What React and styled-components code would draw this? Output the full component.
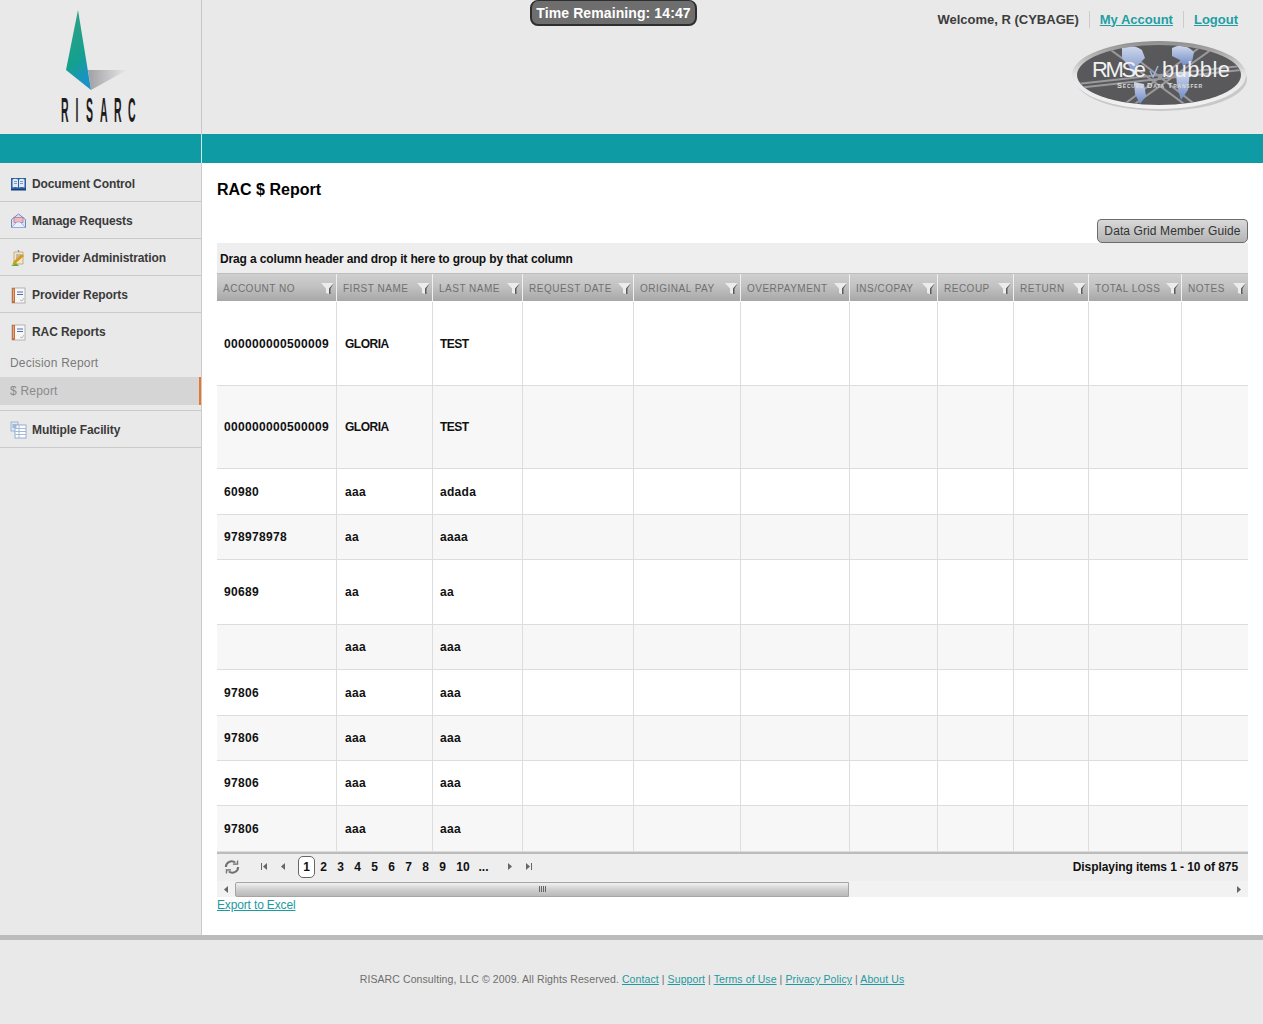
import React from "react";
import styled, { createGlobalStyle } from "styled-components";

const Global = createGlobalStyle`
  html, body { margin: 0; padding: 0; background: #fff; }
  body { font-family: "Liberation Sans", Arial, sans-serif; color: #000; }
  * { box-sizing: border-box; }
`;
const Page = styled.div`width: 1263px; display: flex; flex-direction: column;`;
const Header = styled.header`display: flex; height: 134px; background: #e9e9e9;`;
const LogoCell = styled.div`width: 202px; flex: none; border-right: 1px solid #c8c8c8; padding: 10px 0 0 57px;`;
const HeaderMain = styled.div`flex: 1; display: flex; align-items: flex-start; padding-left: 328px;`;
const Timer = styled.div`
  width: 167px; height: 26px; background: #6e6e6e; border: 2px solid #2e2e2e; border-top-width: 1px;
  border-radius: 8px; color: #fff; font-weight: bold; font-size: 14px; letter-spacing: .1px; line-height: 24px; text-align: center;
`;
const UserCol = styled.div`margin-left: auto; display: flex; flex-direction: column; align-items: flex-end; padding: 10px 15px 0 0;`;
const UserRow = styled.div`display: flex; align-items: center; height: 19px; font-size: 13px; font-weight: bold; color: #3c3c3c; padding-right: 10px; padding-bottom: 1px;`;
const Sep = styled.span`width: 1px; height: 17px; background: #ccc; margin: 0 10px;`;
const TopLink = styled.a`color: #1f9ea3; text-decoration: underline;`;
const Band = styled.div`height: 29px; background: #0f9ba3; padding-left: 201px;`;
const BandLine = styled.div`width: 1px; height: 29px; background: #d3e6e8;`;
const Body = styled.div`display: flex; height: 772px;`;
const Side = styled.nav`width: 202px; flex: none; background: #e9e9e9; border-right: 1px solid #cbcbcb; padding-top: 1px;`;
const MenuItem = styled.div`
  display: flex; align-items: center; gap: 5px; height: ${p => p.$h || 37}px; padding: 2px 0 0 10px;
  font-size: 12px; font-weight: bold; color: #3a3a3a; letter-spacing: -.1px;
  border-bottom: ${p => p.$plain ? "none" : "1px solid #c9c9c9"};
`;
const SubItem = styled.div`
  height: 28px; line-height: 29px; padding-left: 10px; font-size: 12px; letter-spacing: .2px; color: ${p => p.$active ? "#8a8a8a" : "#7a7a7a"};
  background: ${p => p.$active ? "#d5d5d5" : "transparent"};
  width: ${p => p.$active ? "201px" : "auto"};
  border-right: ${p => p.$active ? "2px solid #e8762a" : "none"};
`;
const Divider = styled.div`height: 6px; border-bottom: 1px solid #c9c9c9;`;
const Main = styled.main`flex: 1; padding: 17px 15px 0 15px; display: flex; flex-direction: column; background: #fff;`;
const Title = styled.h1`margin: 0; font-size: 16px; line-height: 20px; font-weight: bold; color: #000;`;
const ButtonRow = styled.div`display: flex; justify-content: flex-end; margin-top: 19px;`;
const GuideButton = styled.button`
  width: 151px; height: 24px; padding: 0; border: 1px solid #6c6c6c; border-radius: 4px 4px 5px 5px;
  background: linear-gradient(#d9d9d9, #b4b4b4); font: 12px "Liberation Sans", Arial, sans-serif; letter-spacing: .1px; color: #333;
`;
const GroupBar = styled.div`height: 31px; padding: 3px 0 0 3px; background: #eeeeee; font-size: 12px; font-weight: bold; letter-spacing: -.13px; line-height: 27px; color: #111; border-bottom: 1px solid #bdbdbd;`;
const Grid = styled.table`width: 1031px; table-layout: fixed; border-collapse: separate; border-spacing: 0;`;
const HeadCell = styled.th`
  height: 28px; padding: 2px 6px 0; position: relative; text-align: left; font-weight: normal; font-size: 10px; letter-spacing: .5px; color: #707070; white-space: nowrap;
  background: linear-gradient(#cfcfcf 0%, #c2c2c2 45%, #a7a7a7 100%) padding-box; border-right: 1px solid #f0f0f0; border-bottom: 1px solid #fff;
  &:last-child { border-right: none; }
`;
const FilterIcon = styled.svg`position: absolute; right: 2px; top: 8px;`;
const Row = styled.tr`height: ${p => p.$h}px; background: ${p => p.$alt ? "#f7f7f7" : "#fff"};`;
const Cell = styled.td`
  padding: 0 0 0 ${p => p.$pad ?? 7}px; font-size: 12px; font-weight: bold; color: #111; border-right: 1px solid #ddd; border-bottom: 1px solid #ddd; white-space: nowrap; overflow: hidden;
  letter-spacing: ${p => p.$ls ?? 0}px;
  &:last-child { border-right: none; }
`;
const Pager = styled.div`
  height: 29px; display: flex; align-items: center; background: #eeeeee; border-top: 2px solid #bcbcbc; padding-bottom: 2px; font-size: 12px; font-weight: bold; color: #111;
`;
const RefreshWrap = styled.span`width: 16px; margin: 0 16px 0 7px; display: flex;`;
const Nav = styled.span`width: 18px; display: flex; justify-content: center;`;
const PageBox = styled.span`
  width: 17px; height: 22px; display: flex; align-items: center; justify-content: center; border: 1px solid ${p => p.$on ? "#666" : "transparent"};
  border-radius: 5px; background: ${p => p.$on ? "#fff" : "transparent"}; flex: none;
`;
const PageWide = styled(PageBox)`width: 24px;`;
const Numbers = styled.div`display: flex; margin: 0 9px 0 6px; align-items: center;`;
const Info = styled.div`margin-left: auto; padding-right: 10px; letter-spacing: -.07px;`;
const Scroll = styled.div`height: 16px; display: flex; align-items: center; background: #f2f2f2;`;
const ScrollArrow = styled.span`width: 18px; flex: none; display: flex; justify-content: center;`;
const Thumb = styled.div`
  width: 614px; height: 15px; border: 1px solid #a5a5a5; border-radius: 2px 0 0 2px; background: linear-gradient(#f1f1f1, #cfcfcf 50%, #b9b9b9);
  display: flex; align-items: center; justify-content: center; gap: 1px;
`;
const Grip = styled.i`width: 1px; height: 6px; background: #666;`;
const ScrollSpace = styled.div`flex: 1;`;
const Export = styled.a`font-size: 12px; line-height: 16px; letter-spacing: -.15px; color: #1c9a9f; text-decoration: underline;`;
const Footer = styled.footer`height: 89px; background: #e9e9e9; border-top: 5px solid #bcbcbc; padding-top: 32px; text-align: center; font-size: 10.5px; letter-spacing: .09px; line-height: 14px; color: #6e6e6e; padding-left: 1px;`;
const FootLink = styled.a`color: #1c9a9f; text-decoration: underline;`;

const Logo = () => (
  <svg width="84" height="124" viewBox="0 0 84 124" style={{ display: "block" }}>
    <defs>
      <linearGradient id="lg1" x1="0" y1="0" x2="0.35" y2="1"><stop offset="0" stopColor="#35a083" /><stop offset=".7" stopColor="#14a08f" /><stop offset="1" stopColor="#1a93c4" /></linearGradient>
      <linearGradient id="lg2" x1="0" y1="0" x2="1" y2="0"><stop offset="0" stopColor="#a0a0a4" /><stop offset="1" stopColor="#e8e8e8" /></linearGradient>
    </defs>
    <polygon points="31,60 70,60 34,80" fill="url(#lg2)" />
    <polygon points="21,0 9,60 34,80" fill="url(#lg1)" />
    <text y="112" fontFamily="Liberation Sans" fontSize="35" fontWeight="bold" fill="#1c1c1c" transform="scale(.3 1)">
      <tspan x="13">R</tspan><tspan x="62">I</tspan><tspan x="97">S</tspan><tspan x="143">A</tspan><tspan x="190">R</tspan><tspan x="237">C</tspan>
    </text>
  </svg>
);

const RmseLogo = () => (
  <svg width="176" height="72" viewBox="0 0 176 72" style={{ display: "block", marginTop: 11 }}>
    <defs>
      <linearGradient id="ring" x1="0" y1="0" x2="0" y2="1"><stop offset="0" stopColor="#8d8d8d" /><stop offset=".5" stopColor="#e6e6e6" /><stop offset="1" stopColor="#f2f2f2" /></linearGradient>
      <linearGradient id="land" x1="0" y1="0" x2="0" y2="1"><stop offset="0" stopColor="#cfd8ec" /><stop offset="1" stopColor="#6f8ac6" /></linearGradient>
      <clipPath id="oval"><ellipse cx="87" cy="35" rx="82" ry="30" /></clipPath>
    </defs>
    <ellipse cx="89" cy="39" rx="86" ry="32" fill="#c8c8c8" />
    <ellipse cx="87" cy="35" rx="87" ry="34" fill="url(#ring)" />
    <ellipse cx="87" cy="35" rx="82" ry="30" fill="#59595b" />
    <g clipPath="url(#oval)" stroke="#9a9a9e" strokeWidth="2" fill="none">
      <path d="M28 2 L115 66 M38 -2 L125 66 M150 2 L60 66 M140 -2 L50 66 M5 44 L170 26 M5 48 L170 30" />
    </g>
    <g clipPath="url(#oval)" fill="url(#land)">
      <path d="M50 8 q10 -5 20 2 l3 8 l-8 8 l-3 12 l-5 -12 l-7 -8 z" />
      <path d="M62 42 l10 2 l2 12 l-6 8 l-5 -10 z" />
      <path d="M100 8 q12 -6 22 4 l-2 10 l-9 4 l-3 -6 l-8 -4 z" />
      <path d="M104 32 l14 0 l-2 18 l-7 10 l-4 -14 z" />
    </g>
    <text x="20" y="37" fontFamily="Liberation Sans" fontSize="22" fill="#f2f2f2" textLength="54">RMSe</text>
    <path d="M78 31 l3 6 l5 -11" stroke="#9bb3e0" strokeWidth="1.500" fill="none" />
    <text x="90" y="37" fontFamily="Liberation Sans" fontSize="22" fill="#f2f2f2" textLength="68">bubble</text>
    <text x="45" y="48" fontFamily="Liberation Sans" fontSize="7.500" fontWeight="bold" fontVariant="small-caps" fill="#dcdcdc" textLength="85">Secure Data Transfer</text>
  </svg>
);

const BookIcon = () => (
  <svg width="17" height="16" viewBox="0 0 17 16"><path d="M1 2h15v11H1z" fill="#2a5d9f" /><path d="M2.500 3.500q3-1.500 5.500 0v8q-2.500-1-5.500 0zM9 3.500q3-1.500 5.500 0v8q-3-1-5.500 0z" fill="#dfeaf5" /><path d="M4 5.500h3M4 7.500h3M10 5.500h3M10 7.500h3" stroke="#7a9cc4" /><path d="M1 13h15v1.500H1z" fill="#123f78" /></svg>
);
const MailIcon = () => (
  <svg width="17" height="16" viewBox="0 0 17 16"><path d="M1.500 6.500L8.500 1l7 5.500v8h-14z" fill="#d5e1f4" stroke="#6d8cc4" /><rect x="4" y="4.500" width="9" height="5" fill="#f0b8c4" stroke="#b05a70" strokeWidth=".6" /><path d="M1.500 14.500L7 9h3l5.500 5.500z" fill="#e9f0fb" stroke="#8aa4d2" strokeWidth=".7" /></svg>
);
const AdminIcon = () => (
  <svg width="17" height="18" viewBox="0 0 17 18"><path d="M4 3h9v12H4z" fill="#f3e8c2" stroke="#a89a70" strokeWidth=".7" /><path d="M6 6h5M6 8h5M6 10h4" stroke="#8b8b8b" /><path d="M2 16l2-4 8-7 2 2-8 7z" fill="#d69a1e" /><path d="M1 17h8l-3-3z" fill="#6fa83a" /><path d="M8 1l1 2" stroke="#777" /></svg>
);
const ReportIcon = () => (
  <svg width="17" height="17" viewBox="0 0 17 17"><rect x="2" y="1" width="13" height="15" fill="#f6f6f6" stroke="#9a9a9a" strokeWidth=".7" /><rect x="2" y="1" width="3" height="15" fill="#c96f3d" /><path d="M3 3h1M3 5h1M3 7h1M3 9h1M3 11h1M3 13h1" stroke="#f4e1d2" /><path d="M7 5h6M7 7.500h6" stroke="#4a71b8" strokeWidth="1.200" /><path d="M10 13l2 1 2-3" stroke="#b5b5b5" fill="none" /></svg>
);
const FacilityIcon = () => (
  <svg width="17" height="18" viewBox="0 0 17 18"><rect x="1" y="1" width="7" height="9" fill="#dfe7f3" stroke="#8ea6c8" strokeWidth=".8" /><rect x="5" y="4" width="11" height="13" fill="#fff" stroke="#7f9cc6" strokeWidth=".8" /><path d="M5 7.500h11M5 10.500h11M5 13.500h11M9 4v13" stroke="#a4b9d8" /><rect x="2.500" y="3" width="4" height="4" fill="#9fb7d8" /></svg>
);
const Funnel = () => (
  <FilterIcon width="13" height="13" viewBox="0 0 13 13"><polygon points="0,1 13,1 8,6.500 8,12 5,11 5,6.500" fill="#ececec" /><polygon points="13,1 8,6.500 8,12 9.500,12 9.500,6.500" fill="#5a5a5a" /></FilterIcon>
);
const Tri = ({ dir, bar }) => (
  <svg width="8" height="9" viewBox="0 0 8 9">
    {dir === "l" ? <polygon points="6,1 2,4.500 6,8" fill="#666" /> : <polygon points="2,1 6,4.500 2,8" fill="#666" />}
    {bar && <rect x={dir === "l" ? 0 : 7} y="1" width="1" height="7" fill="#666" />}
  </svg>
);
const Refresh = () => (
  <svg width="17" height="16" viewBox="0 0 17 16" fill="none" stroke="#707070" strokeWidth="2.200"><path d="M2 8a6 6 0 0 1 10-4.500" /><path d="M15 8a6 6 0 0 1-10 4.500" /><path d="M9.500 5h5V1" fill="#ccc" strokeWidth="1.200" /><path d="M7.500 11h-5v4" fill="#ccc" strokeWidth="1.200" /></svg>
);

const cols = [["ACCOUNT NO", 120], ["FIRST NAME", 96], ["LAST NAME", 90], ["REQUEST DATE", 111], ["ORIGINAL PAY", 107], ["OVERPAYMENT", 109], ["INS/COPAY", 88], ["RECOUP", 76], ["RETURN", 75], ["TOTAL LOSS", 93], ["NOTES", 66]];
const rows = [
  ["000000000500009", "GLORIA", "TEST", 84], ["000000000500009", "GLORIA", "TEST", 83], ["60980", "aaa", "adada", 46], ["978978978", "aa", "aaaa", 45],
  ["90689", "aa", "aa", 65], ["", "aaa", "aaa", 45], ["97806", "aaa", "aaa", 46], ["97806", "aaa", "aaa", 45], ["97806", "aaa", "aaa", 45], ["97806", "aaa", "aaa", 46],
];
// Names are spaced by case, so caps and lower-case runs keep the widths of the reference.
const nameSpacing = s => (s === s.toUpperCase() ? -0.5 : 0.3);

export default function App() {
  return (
    <Page>
      <Global />
      <Header>
        <LogoCell><Logo /></LogoCell>
        <HeaderMain>
          <Timer>Time Remaining: 14:47</Timer>
          <UserCol>
            <UserRow>Welcome, R (CYBAGE)<Sep /><TopLink>My Account</TopLink><Sep /><TopLink>Logout</TopLink></UserRow>
            <RmseLogo />
          </UserCol>
        </HeaderMain>
      </Header>
      <Band><BandLine /></Band>
      <Body>
        <Side>
          <MenuItem $h={38}><BookIcon />Document Control</MenuItem>
          <MenuItem><MailIcon />Manage Requests</MenuItem>
          <MenuItem><AdminIcon />Provider Administration</MenuItem>
          <MenuItem><ReportIcon />Provider Reports</MenuItem>
          <MenuItem $plain $h={36}><ReportIcon />RAC Reports</MenuItem>
          <SubItem>Decision Report</SubItem>
          <SubItem $active>$ Report</SubItem>
          <Divider />
          <MenuItem><FacilityIcon />Multiple Facility</MenuItem>
        </Side>
        <Main>
          <Title>RAC $ Report</Title>
          <ButtonRow><GuideButton>Data Grid Member Guide</GuideButton></ButtonRow>
          <GroupBar>Drag a column header and drop it here to group by that column</GroupBar>
          <Grid>
            <colgroup>{cols.map(([n, w]) => <col key={n} width={w} />)}</colgroup>
            <thead><tr>{cols.map(([n]) => <HeadCell key={n}>{n}<Funnel /></HeadCell>)}</tr></thead>
            <tbody>
              {rows.map((r, i) => (
                <Row key={i} $h={r[3]} $alt={i % 2 === 1}>
                  <Cell $ls={0.33}>{r[0]}</Cell><Cell $pad={8} $ls={nameSpacing(r[1])}>{r[1]}</Cell><Cell $ls={nameSpacing(r[2])}>{r[2]}</Cell>
                  {cols.slice(3).map(([n]) => <Cell key={n} />)}
                </Row>
              ))}
            </tbody>
          </Grid>
          <Pager>
            <RefreshWrap><Refresh /></RefreshWrap>
            <Nav><Tri dir="l" bar /></Nav><Nav><Tri dir="l" /></Nav>
            <Numbers>
              <PageBox $on>1</PageBox>
              {[2, 3, 4, 5, 6, 7, 8, 9].map(n => <PageBox key={n}>{n}</PageBox>)}
              <PageWide>10</PageWide><PageBox>...</PageBox>
            </Numbers>
            <Nav><Tri dir="r" /></Nav><Nav><Tri dir="r" bar /></Nav>
            <Info>Displaying items 1 - 10 of 875</Info>
          </Pager>
          <Scroll>
            <ScrollArrow><Tri dir="l" /></ScrollArrow>
            <Thumb><Grip /><Grip /><Grip /><Grip /></Thumb>
            <ScrollSpace />
            <ScrollArrow><Tri dir="r" /></ScrollArrow>
          </Scroll>
          <Export>Export to Excel</Export>
        </Main>
      </Body>
      <Footer>
        RISARC Consulting, LLC © 2009. All Rights Reserved. <FootLink>Contact</FootLink> | <FootLink>Support</FootLink> | <FootLink>Terms of Use</FootLink> | <FootLink>Privacy Policy</FootLink> | <FootLink>About Us</FootLink>
      </Footer>
    </Page>
  );
}
